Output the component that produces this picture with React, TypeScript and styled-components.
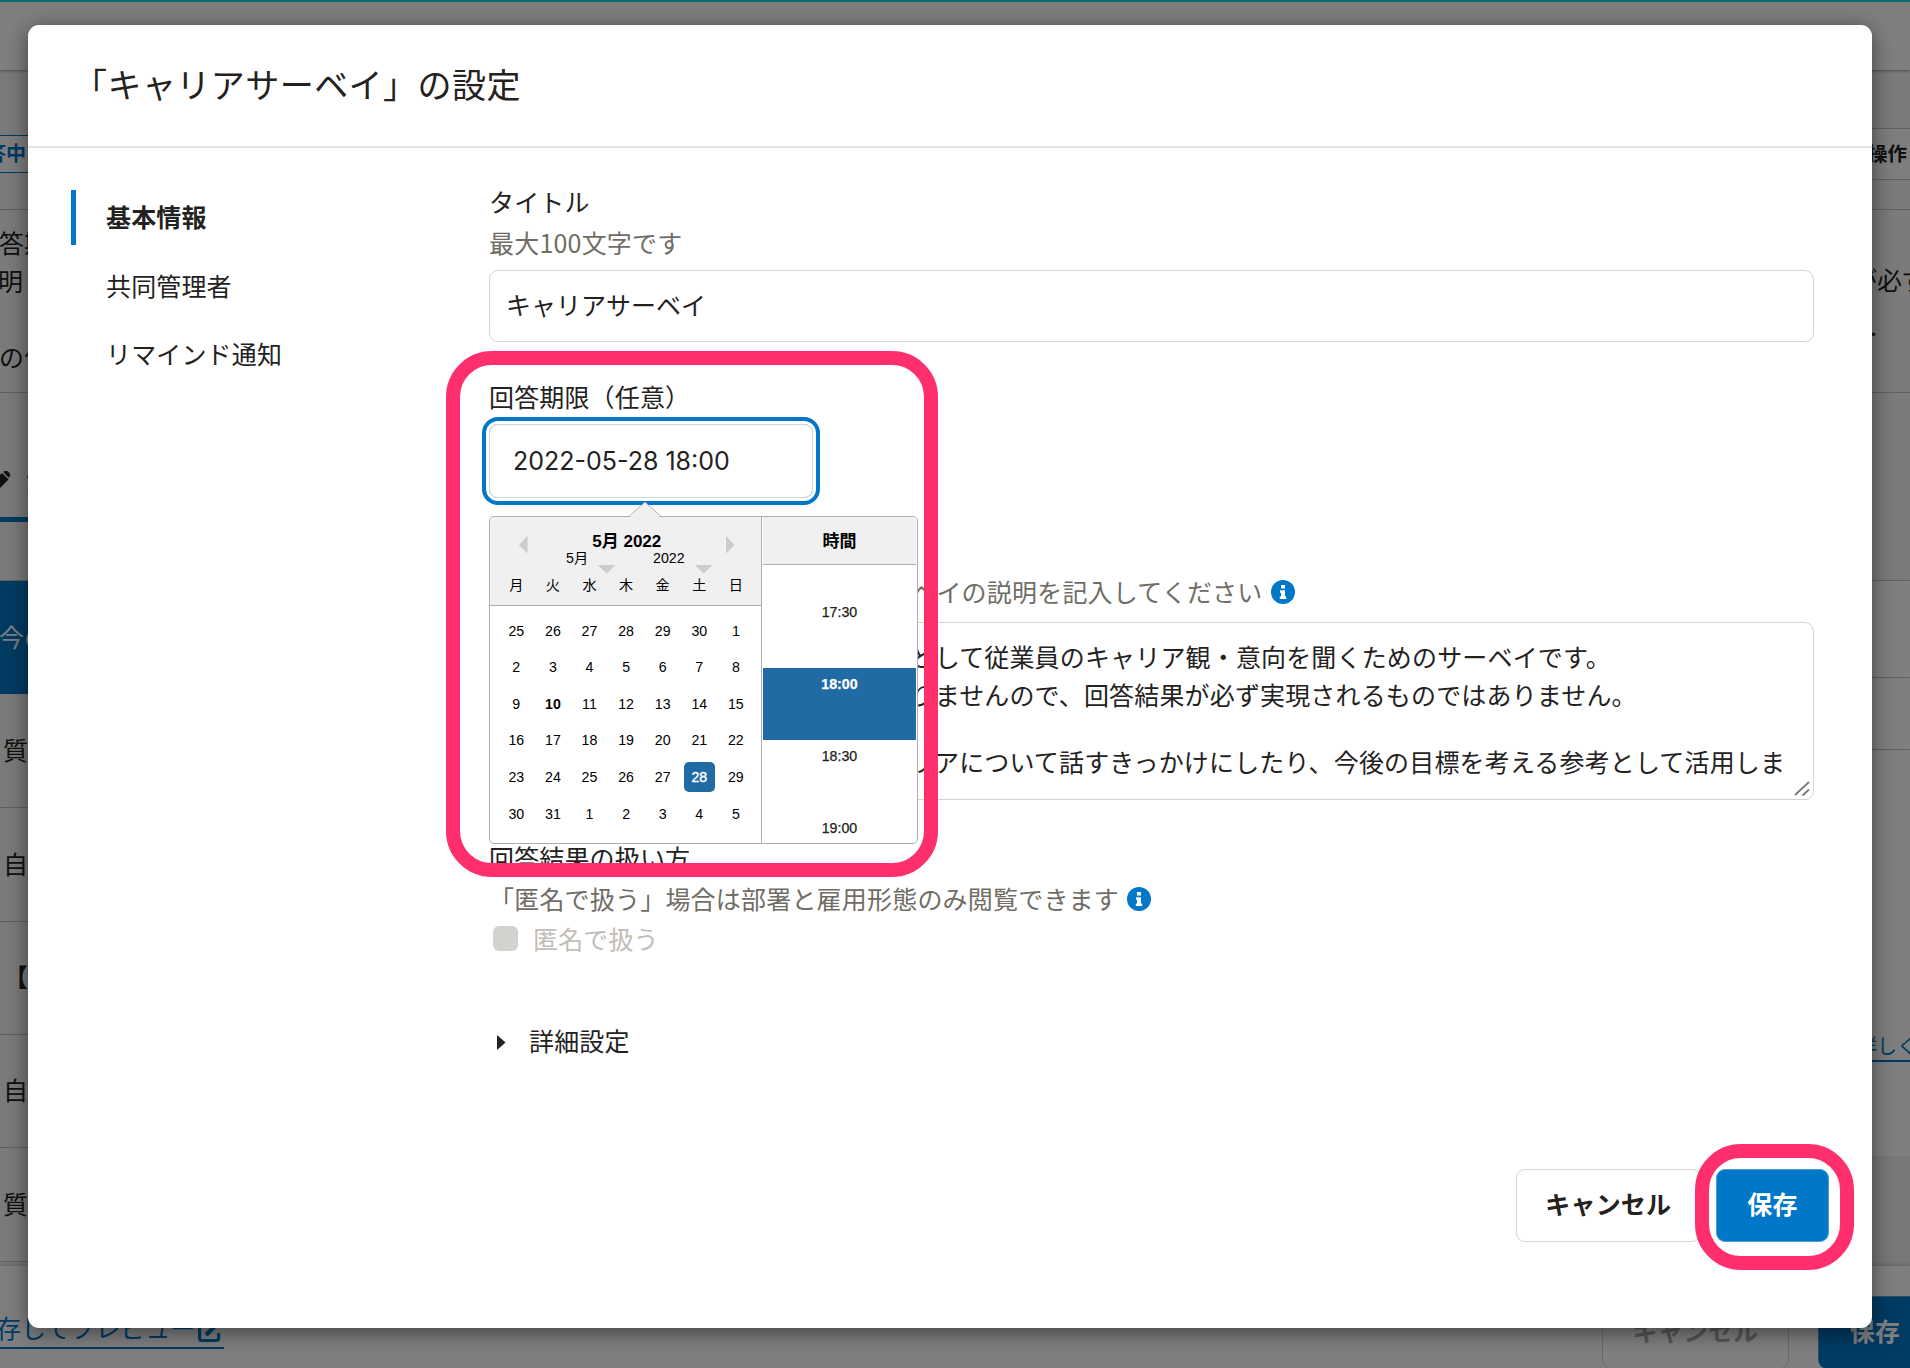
import React from "react";
import styled, { createGlobalStyle, css } from "styled-components";

const jp = `"Noto Sans CJK JP", "Noto Sans", sans-serif`;
const ink = "#23221e";
const muted = "#706d65";
const blue = "#0077c7";
const pickerBlue = "#216ba5";
const line = "#d6d3d0";
const pickerLine = "#aeaeae";

const Global = createGlobalStyle`
  *, *::before, *::after { box-sizing: border-box; }
  body { margin: 0; overflow: hidden; background: #f8f7f6; }
`;

const Screen = styled.div`
  position: relative;
  width: 1910px;
  height: 1368px;
  overflow: hidden;
  background: #f8f7f6;
  color: ${ink};
  font: 400 25px/1 ${jp};
`;

/* ---------- survey page behind the dialog ---------- */

const Page = styled.div`
  display: flex;
  flex-direction: column;
  height: 100%;
`;

const TopBar = styled.header`
  flex: none;
  height: 70px;
  background: #fff;
  border-top: 2px solid #18d4e6;
  box-shadow: 0 1px 3px rgba(0, 0, 0, 0.4);
`;

const Columns = styled.div`
  flex: 1;
  min-height: 0;
  display: flex;
  justify-content: space-between;
`;

const Rail = styled.div<{ $w: number }>`
  width: ${(p) => p.$w}px;
  overflow: hidden;
`;

const RailRow = styled.div<{
  $h: number;
  $shift?: number;
  $bg?: string;
  $color?: string;
  $bold?: boolean;
  $size?: number;
  $line?: boolean;
}>`
  display: flex;
  align-items: center;
  height: ${(p) => p.$h}px;
  padding-left: ${(p) => Math.max(p.$shift ?? 0, 0)}px;
  padding-bottom: ${(p) => (p.$h > 20 ? 3 : 0)}px;
  text-indent: ${(p) => Math.min(p.$shift ?? 0, 0)}px;
  background: ${(p) => p.$bg ?? "transparent"};
  color: ${(p) => p.$color ?? ink};
  font-weight: ${(p) => (p.$bold ? 700 : 400)};
  font-size: ${(p) => p.$size ?? 25}px;
  white-space: nowrap;
  ${(p) => p.$line && css`border-bottom: 1px solid #c4c1be;`}
`;

const Status = styled(RailRow)`
  border: solid ${blue};
  border-width: 1px 0;
  background: #fff;
`;

const Tab = styled(RailRow)`
  border-bottom: 5px solid ${blue};
  svg { flex: none; margin-right: 15px; }
`;

const MoreLink = styled.span`
  padding-bottom: 4px;
  border-bottom: 2px solid ${blue};
`;

const PageFooter = styled.footer`
  flex: none;
  display: flex;
  align-items: flex-start;
  height: 102px;
  background: #fff;
  box-shadow: 0 -2px 4px rgba(0, 0, 0, 0.15);
`;

const Preview = styled.a`
  display: flex;
  align-items: center;
  height: 41px;
  margin: 42px auto 0 -29px;
  border-bottom: 2px solid ${blue};
  color: ${blue};
  svg { margin: 6px 3px 0 2px; }
`;

const Button = styled.button<{ $primary?: boolean; $w: number; $faded?: boolean }>`
  flex: none;
  width: ${(p) => p.$w}px;
  height: 73px;
  padding: 0 0 3px;
  border: 1px solid ${(p) => (p.$primary ? "#4d9fd7" : line)};
  border-radius: 9px;
  background: ${(p) => (p.$primary ? blue : "#fff")};
  color: ${(p) => (p.$primary ? "#fff" : p.$faded ? "#b0ada8" : ink)};
  font: 700 25px/1 ${jp};
  letter-spacing: 0.15px;
`;

const PageButtons = styled.div`
  display: flex;
  gap: 29px;
  margin: 29.5px -22px 0 0;
`;

/* ---------- dialog ---------- */

const Overlay = styled.div`
  position: absolute;
  inset: 0;
  padding: 24.5px 38px 40px 28px;
  background: rgba(0, 0, 0, 0.5);
`;

const Dialog = styled.section`
  display: flex;
  flex-direction: column;
  width: 1843.5px;
  height: 1303px;
  border-radius: 11px;
  background: #fff;
  box-shadow: 0 4px 22px rgba(0, 0, 0, 0.5);
`;

const DialogHead = styled.header`
  flex: none;
  display: flex;
  align-items: center;
  height: 123.5px;
  padding: 0 0 3px 45px;
  border-bottom: 2px solid #e3e3e2;
`;

const DialogTitle = styled.h1`
  margin: 0;
  font: 400 34px/1 ${jp};
  letter-spacing: 0.45px;
`;

const DialogBody = styled.div`
  flex: 1;
  display: flex;
  letter-spacing: 0.15px;
`;

const Nav = styled.nav`
  flex: none;
  width: 418px;
  margin-left: 43px;
  padding-top: 42px;
  display: flex;
  flex-direction: column;
  gap: 13px;
`;

const NavItem = styled.div<{ $active?: boolean }>`
  display: flex;
  align-items: center;
  height: 55px;
  padding: 0 0 ${(p) => (p.$active ? 3 : 1)}px 30px;
  border-left: 5px solid ${(p) => (p.$active ? blue : "transparent")};
  font-weight: ${(p) => (p.$active ? 700 : 400)};
`;

const Form = styled.div`
  width: 1325px;
  padding-top: 35px;
`;

const Field = styled.div<{ $gap: number }>`
  position: relative;
  margin-bottom: ${(p) => p.$gap}px;
`;

const Label = styled.div`
  display: flex;
  align-items: center;
  height: 40px;
  padding-bottom: 3px;
`;

const Hint = styled(Label)<{ $indent?: number }>`
  gap: 8px;
  padding-left: ${(p) => p.$indent ?? 0}px;
  padding-bottom: 1px;
  color: ${muted};
  letter-spacing: 0.2px;
  white-space: nowrap;
  svg { margin-top: 1px; }
`;

const Input = styled.div`
  display: flex;
  align-items: center;
  height: 72px;
  margin-top: 7px;
  padding: 0 0 3px 16px;
  border: 1px solid ${line};
  border-radius: 9px;
  letter-spacing: 0;
`;

const DateInput = styled.div`
  display: flex;
  align-items: center;
  width: 324px;
  height: 74px;
  margin-top: 6px;
  padding-left: 23px;
  border: 1px solid ${line};
  border-radius: 9px;
  box-shadow: 0 0 0 3px #fff, 0 0 0 7px ${blue};
  font: 400 25px/1 Inter, ${jp};
  letter-spacing: 0;
`;

const TextArea = styled.div`
  position: relative;
  height: 178px;
  margin-top: 10px;
  padding: 14px 0 0 17px;
  border: 1px solid ${line};
  border-radius: 9px;
  letter-spacing: 0.16px;
  white-space: nowrap;
`;

const TextLine = styled.div<{ $h: number }>`
  height: ${(p) => p.$h}px;
  line-height: ${(p) => p.$h}px;
`;

const Grip = styled.svg`
  position: absolute;
  right: 2px;
  bottom: 2px;
`;

const CheckRow = styled.label`
  display: flex;
  align-items: center;
  gap: 15px;
  height: 42px;
  padding: 0 0 3px 4px;
  color: #c1bdb7;
`;

const CheckBox = styled.span`
  width: 25px;
  height: 25px;
  border-radius: 6px;
  background: #d2d2ce;
`;

const Details = styled.div`
  display: flex;
  align-items: center;
  gap: 23px;
  height: 40px;
  margin-top: 61px;
  padding: 0 0 3px 8px;
  svg { margin-top: 3px; }
`;

const DialogFoot = styled.footer`
  flex: none;
  display: flex;
  justify-content: flex-end;
  gap: 15px;
  height: 159px;
  padding-right: 42.5px;
`;

/* ---------- date picker ---------- */

const Picker = styled.div`
  position: absolute;
  top: 137.5px;
  left: 0;
  z-index: 1;
  display: flex;
  width: 429px;
  height: 328px;
  border: 1px solid ${pickerLine};
  border-radius: 5px;
  background: #fff;
  color: #000;
  font: 400 14.2px/1 "Liberation Sans", ${jp};
  letter-spacing: 0;
`;

const Pointer = styled.svg`
  position: absolute;
  left: 138px;
  top: -15.5px;
`;

const Month = styled.div`
  width: 272px;
  border-right: 1px solid ${pickerLine};
`;

const MonthHead = styled.div`
  height: 89px;
  padding-top: 16px;
  border-bottom: 1px solid ${pickerLine};
  border-radius: 5px 0 0 0;
  background: #f0f0f0;
`;

const MonthTitleRow = styled.div`
  display: flex;
  justify-content: space-between;
  align-items: flex-start;
  height: 18px;
  padding: 0 26px 0 28.5px;
  svg { margin-top: 3px; }
`;

const PickerTitle = styled.div`
  font-size: 17px;
  font-weight: 700;
  line-height: 18px;
`;

const Selects = styled.div`
  display: flex;
  height: 23px;
  padding-left: 76px;
  line-height: 15px;
`;

const Select = styled.span<{ $w: number; $gap: number }>`
  display: flex;
  gap: ${(p) => p.$gap}px;
  width: ${(p) => p.$w}px;
  svg { flex: none; margin-top: 14px; }
`;

const Week = styled.div<{ $h: number }>`
  display: grid;
  grid-template-columns: repeat(7, 36.6px);
  align-items: center;
  justify-items: center;
  height: ${(p) => p.$h}px;
  padding-left: 8px;
`;

const Weeks = styled.div`
  padding-top: 7px;
`;

const Day = styled.span<{ $today?: boolean; $selected?: boolean }>`
  width: 30.5px;
  line-height: 30.5px;
  text-align: center;
  border-radius: 5px;
  ${(p) => p.$today && css`font-weight: 700;`}
  ${(p) => p.$selected && css`
    background: ${pickerBlue};
    color: #fff;
    -webkit-text-stroke: 0.4px #fff;
  `}
`;

const Times = styled.div`
  flex: 1;
  display: flex;
  flex-direction: column;
  padding: 0 1px;
`;

const TimeHead = styled.div`
  display: flex;
  align-items: center;
  justify-content: center;
  flex: none;
  height: 48px;
  padding-top: 3px;
  border-bottom: 1px solid ${pickerLine};
  border-radius: 0 5px 0 0;
  background: #f0f0f0;
`;

const TimeList = styled.div`
  flex: 1;
  min-height: 0;
  padding-top: 31px;
  overflow: hidden;
`;

const Time = styled.div<{ $selected?: boolean }>`
  height: 72px;
  padding-top: 9px;
  line-height: 15px;
  text-align: center;
  color: #222;
  -webkit-text-stroke: 0.25px currentColor;
  ${(p) => p.$selected && css`
    background: ${pickerBlue};
    color: #fff;
    font-weight: 700;
  `}
`;

/* Highlight frames drawn over the finished screen */
const Marker = styled.div<{ $x: number; $y: number; $w: number; $h: number }>`
  position: absolute;
  left: ${(p) => p.$x}px;
  top: ${(p) => p.$y}px;
  width: ${(p) => p.$w}px;
  height: ${(p) => p.$h}px;
  border: 14px solid #ff2f6e;
  border-radius: 46px;
`;

const Info = () => (
  <svg width="24" height="24" viewBox="0 0 24 24">
    <circle cx="12" cy="12" r="12" fill={blue} />
    <path d="M10 5h4v3.6h-4zM9 10.2h5v6.3h1.2V19H8.8v-2.5H10v-3.8H9z" fill="#fff" />
  </svg>
);

const Triangle = ({ points, w, h, fill = "#ccc" }: { points: string; w: number; h: number; fill?: string }) => (
  <svg width={w} height={h}>
    <polygon points={points} fill={fill} />
  </svg>
);

const weekdays = ["月", "火", "水", "木", "金", "土", "日"];
const weeks = [
  [25, 26, 27, 28, 29, 30, 1],
  [2, 3, 4, 5, 6, 7, 8],
  [9, 10, 11, 12, 13, 14, 15],
  [16, 17, 18, 19, 20, 21, 22],
  [23, 24, 25, 26, 27, 28, 29],
  [30, 31, 1, 2, 3, 4, 5],
];
const times = ["17:30", "18:00", "18:30", "19:00"];

const DatePicker = () => (
  <Picker>
    <Month>
      <MonthHead>
        <MonthTitleRow>
          <Triangle w={9} h={18} points="0,9 8.5,0 8.5,17.5" />
          <PickerTitle>5月 2022</PickerTitle>
          <Triangle w={9} h={18} points="0,0 8.5,9 0,17.5" />
        </MonthTitleRow>
        <Selects>
          <Select $w={87} $gap={10}>
            5月
            <Triangle w={18} h={9} points="0,0 17.5,0 8.7,8.5" />
          </Select>
          <Select $w={80} $gap={10}>
            2022
            <Triangle w={18} h={9} points="0,0 17.5,0 8.7,8.5" />
          </Select>
        </Selects>
        <Week $h={24}>
          {weekdays.map((d) => (
            <span key={d}>{d}</span>
          ))}
        </Week>
      </MonthHead>
      <Weeks>
        {weeks.map((week, r) => (
          <Week $h={36.6} key={r}>
            {week.map((d, c) => (
              <Day key={c} $today={r === 2 && d === 10} $selected={r === 4 && d === 28}>
                {d}
              </Day>
            ))}
          </Week>
        ))}
      </Weeks>
    </Month>
    <Times>
      <TimeHead>
        <PickerTitle>時間</PickerTitle>
      </TimeHead>
      <TimeList>
        {times.map((t) => (
          <Time key={t} $selected={t === "18:00"}>
            {t}
          </Time>
        ))}
      </TimeList>
    </Times>
    <Pointer width="34" height="17">
      <path d="M1.5 16.5 17 1 32.5 16.5z" fill="#f0f0f0" />
      <path d="M1 15.5 17 1 33 15.5" fill="none" stroke={pickerLine} />
    </Pointer>
  </Picker>
);

const SurveyPage = () => (
  <Page>
    <TopBar />
    <Columns>
      <Rail $w={60}>
        <RailRow $h={65} />
        <Status $h={38} $shift={-14} $color={blue} $bold $size={20}>答中</Status>
        <RailRow $h={37} $line />
        <RailRow $h={15} />
        <RailRow $h={38} $shift={-1}>答期</RailRow>
        <RailRow $h={38} $shift={-2}>明</RailRow>
        <RailRow $h={38} />
        <RailRow $h={37} $shift={-1}>の作</RailRow>
        <RailRow $h={17} $line />
        <RailRow $h={52} />
        <Tab $h={77} $bold>
          <svg width="11" height="18" viewBox="0 0 11 18">
            <path d="M-8 12 2 2 8.5 8.5-1.5 18.5z" fill={ink} />
            <path d="M3.2 1 4.5 0q2-1 3.5.5l1.5 1.5q1.5 2 .2 3.5L8.7 6.8z" fill={ink} />
          </svg>
          質問
        </Tab>
        <RailRow $h={59} $line />
        <RailRow $h={113} $shift={-1} $bg={blue} $color="#fff">今の</RailRow>
        <RailRow $h={114} $shift={3} $line>質問</RailRow>
        <RailRow $h={114} $shift={3} $line>自由</RailRow>
        <RailRow $h={113} $shift={3} $bold $line>【キ</RailRow>
        <RailRow $h={113} $shift={3} $line>自由</RailRow>
        <RailRow $h={114} $shift={3} $line>質問</RailRow>
      </Rail>
      <Rail $w={60}>
        <RailRow $h={59} $line />
        <RailRow $h={51} $shift={18} $bold $size={19.5} $line $bg="#fdfdfd">操作</RailRow>
        <RailRow $h={30} $line />
        <RailRow $h={52} />
        <RailRow $h={38} $shift={2}>が必ず</RailRow>
        <RailRow $h={54} $shift={20}>.</RailRow>
        <RailRow $h={39} $line />
        <RailRow $h={188} $line />
        <RailRow $h={97} $bg="#fff" $line />
        <RailRow $h={71} $bg="#fff" />
        <RailRow $h={1} $bg="#c4c1be" />
        <RailRow $h={272} $bg="#fff" />
        <RailRow $h={56} $bg="#fff" $shift={7} $size={20} $color={blue}>
          <MoreLink>詳しく見る</MoreLink>
        </RailRow>
        <RailRow $h={78} $bg="#fff" />
        <RailRow $h={114} $bg="#f3f1ee" />
      </Rail>
    </Columns>
    <PageFooter>
      <Preview>
        保存してプレビュー
        <svg width="24" height="24" viewBox="0 0 24 24" fill="none" stroke={blue} strokeWidth="3.2">
          <path d="M11 3H4.5Q2.6 3 2.6 5v14.500q0 2 2 2h15q2 0 2-2V14" />
          <path d="M9 16 20 5" strokeWidth="4.5" />
        </svg>
      </Preview>
      <PageButtons>
        <Button $w={187} $faded>キャンセル</Button>
        <Button $w={114} $primary>保存</Button>
      </PageButtons>
    </PageFooter>
  </Page>
);

export default function App() {
  return (
    <Screen>
      <Global />
      <SurveyPage />
      <Overlay>
        <Dialog>
          <DialogHead>
            <DialogTitle>「キャリアサーベイ」の設定</DialogTitle>
          </DialogHead>
          <DialogBody>
            <Nav>
              <NavItem $active>基本情報</NavItem>
              <NavItem>共同管理者</NavItem>
              <NavItem>リマインド通知</NavItem>
            </Nav>
            <Form>
              <Field $gap={36}>
                <Label>タイトル</Label>
                <Hint>最大100文字です</Hint>
                <Input>キャリアサーベイ</Input>
              </Field>
              <Field $gap={34}>
                <Label>回答期限（任意）</Label>
                <DateInput>2022-05-28 18:00</DateInput>
                <DatePicker />
              </Field>
              <Field $gap={39}>
                <Label>説明</Label>
                <Hint $indent={19}>
                  回答画面に表示されるキャリアサーベイの説明を記入してください
                  <Info />
                </Hint>
                <TextArea>
                  <TextLine $h={38}>本サーベイは、人事施策の検討材料として従業員のキャリア観・意向を聞くためのサーベイです。</TextLine>
                  <TextLine $h={38}>異動や配置等を確約するものではありませんので、回答結果が必ず実現されるものではありません。</TextLine>
                  <TextLine $h={29} />
                  <TextLine $h={38}>上司と部下とで今後の働き方やキャリアについて話すきっかけにしたり、今後の目標を考える参考として活用しま</TextLine>
                  <Grip width="17" height="17" stroke="#777" strokeWidth="1.8">
                    <path d="M1 15 15 2M8.5 15.5 15 9.5" />
                  </Grip>
                </TextArea>
              </Field>
              <Label>回答結果の扱い方</Label>
              <Hint>
                「匿名で扱う」場合は部署と雇用形態のみ閲覧できます
                <Info />
              </Hint>
              <CheckRow>
                <CheckBox />
                匿名で扱う
              </CheckRow>
              <Details>
                <Triangle w={9} h={15} points="0,0 8.5,7.5 0,15" fill={ink} />
                詳細設定
              </Details>
            </Form>
          </DialogBody>
          <DialogFoot>
            <Button $w={185.5}>キャンセル</Button>
            <Button $w={113} $primary>保存</Button>
          </DialogFoot>
        </Dialog>
      </Overlay>
      <Marker $x={445.5} $y={351} $w={492.5} $h={526} />
      <Marker $x={1695} $y={1143.5} $w={159} $h={126.5} />
    </Screen>
  );
}
